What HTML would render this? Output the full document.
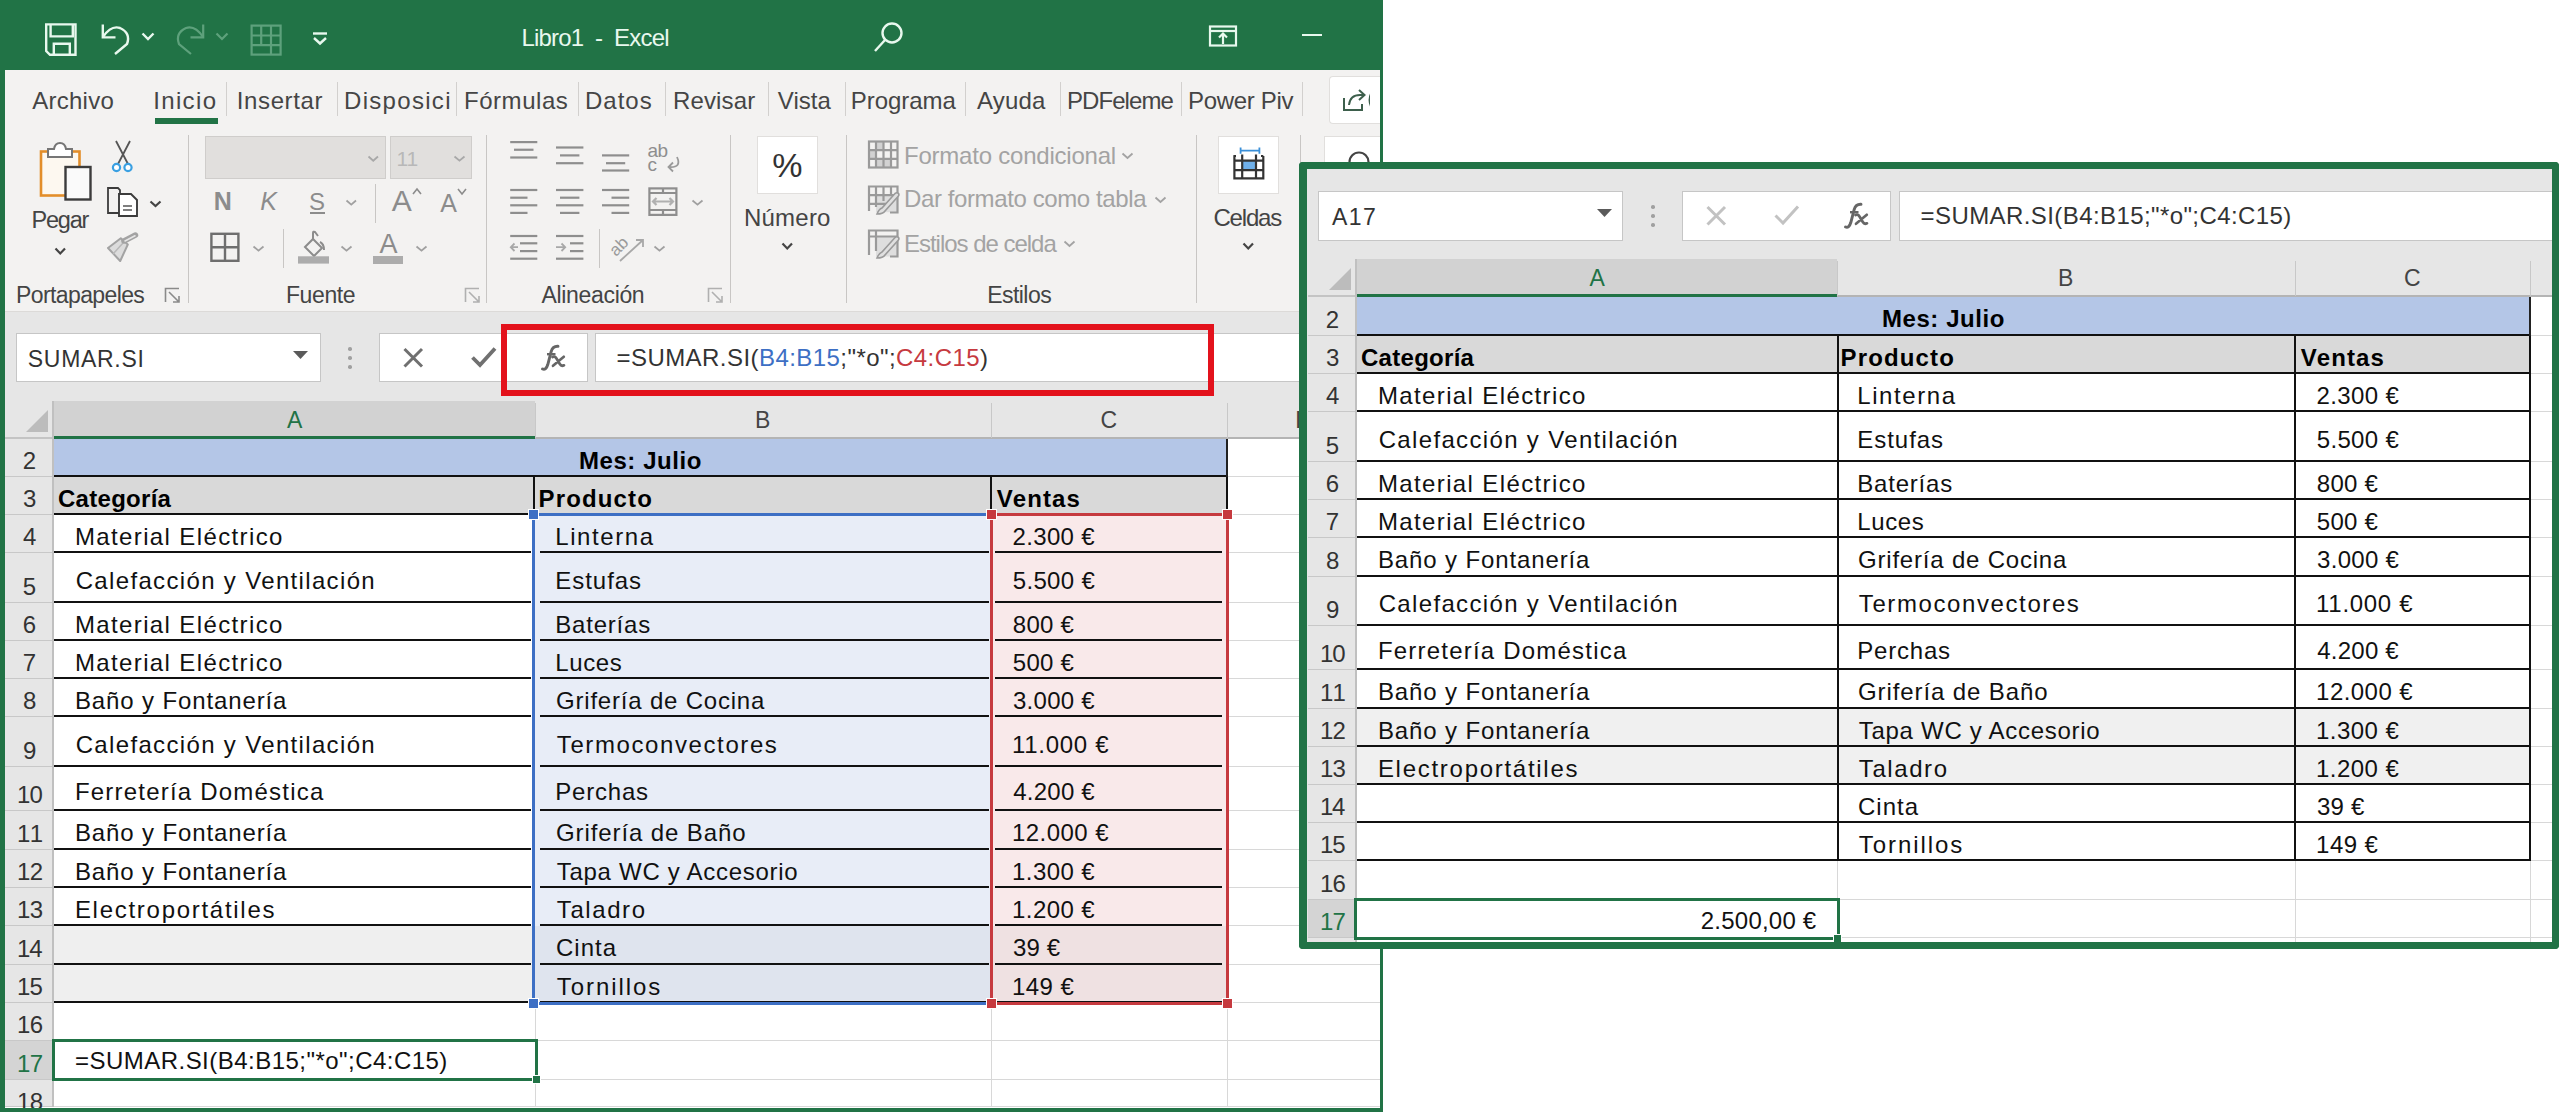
<!DOCTYPE html><html><head><meta charset="utf-8"><style>
html,body{margin:0;padding:0;}
body{width:2560px;height:1112px;overflow:hidden;position:relative;background:#fff;font-family:"Liberation Sans",sans-serif;}
.r{position:absolute;box-sizing:border-box;}
.t{position:absolute;white-space:pre;}
</style></head><body>
<div class="r" style="left:0px;top:0px;width:1383px;height:1112px;background:#ffffff;"></div>
<div class="r" style="left:0px;top:0px;width:1383px;height:70px;background:#217346;"></div>
<div class="r" style="left:5px;top:70px;width:1375px;height:242px;background:#f3f2f1;"></div>
<div class="r" style="left:5px;top:311px;width:1375px;height:1px;background:#dcdad8;"></div>
<div class="r" style="left:5px;top:312px;width:1375px;height:89px;background:#e6e6e6;"></div>
<svg class="r" style="left:40px;top:20px;" width="42" height="40" viewBox="0 0 42 40"><g fill="none" stroke="#e8f8ee" stroke-width="2.4" stroke-linejoin="miter"><path d="M6.2 4.4 H35.5 V34.8 H10 L6.2 31 Z"/><path d="M10.6 4.4 V16.4 H32.8 V4.4"/><path d="M13.8 34.8 V23.8 H29.8 V34.8"/></g></svg>
<svg class="r" style="left:98px;top:20px;" width="40" height="40" viewBox="0 0 40 40"><g fill="none" stroke="#e8f8ee" stroke-width="2.4" stroke-linecap="butt"><path d="M5 17 Q13 5 22 8 Q33 13 29 24 L17 34"/><path d="M4.8 4.4 V17.4 H17.5"/></g></svg>
<svg class="r" style="left:140px;top:30px;" width="16" height="12" viewBox="0 0 16 12"><path d="M2.5 3.5 L8 9 L13.5 3.5" fill="none" stroke="#e8f8ee" stroke-width="2.4"/></svg>
<svg class="r" style="left:172px;top:20px;" width="40" height="40" viewBox="0 0 40 40"><g fill="none" stroke="#5ea17c" stroke-width="2.2"><path d="M31 17 Q23 5 14 8 Q3 13 7 24 L19 34"/><path d="M31.2 4.4 V17.4 H18.5"/></g></svg>
<svg class="r" style="left:214px;top:30px;" width="16" height="12" viewBox="0 0 16 12"><path d="M2.5 3.5 L8 9 L13.5 3.5" fill="none" stroke="#5ea17c" stroke-width="2.2"/></svg>
<svg class="r" style="left:248px;top:22px;" width="36" height="36" viewBox="0 0 36 36"><g fill="none" stroke="#5ea17c" stroke-width="2.2"><rect x="3.6" y="3.6" width="29" height="29"/><path d="M3.6 13.5 H32.6 M3.6 23.2 H32.6 M13.2 3.6 V23.2 M23 3.6 V32.6"/></g></svg>
<svg class="r" style="left:310px;top:28px;" width="20" height="20" viewBox="0 0 20 20"><g fill="none" stroke="#e8f8ee" stroke-width="2.4"><path d="M3 5.5 H17"/><path d="M4 10 L10 15.5 L16 10"/></g></svg>
<span class="t" style="left:521.4px;top:25.6px;font-size:24px;line-height:24px;letter-spacing:-0.79px;color:#e8f8ee;">Libro1  -  Excel</span>
<svg class="r" style="left:870px;top:18px;" width="36" height="38" viewBox="0 0 36 38"><g fill="none" stroke="#e8f8ee" stroke-width="2.4"><circle cx="22" cy="15" r="9.5"/><path d="M15 22 L5 33"/></g></svg>
<svg class="r" style="left:1206px;top:22px;" width="34" height="28" viewBox="0 0 34 28"><g fill="none" stroke="#e8f8ee" stroke-width="2.2"><rect x="4" y="4.5" width="26" height="19"/><path d="M4 9 H30"/><path d="M17 22 V12 M13 15.5 L17 11.5 L21 15.5"/></g></svg>
<div class="r" style="left:1302px;top:34px;width:20px;height:2px;background:#e8f8ee;"></div>
<span class="t" style="left:32.3px;top:89.0px;font-size:24px;line-height:24px;letter-spacing:0.24px;color:#454545;">Archivo</span>
<span class="t" style="left:153.2px;top:89.0px;font-size:24px;line-height:24px;letter-spacing:1.36px;color:#454545;">Inicio</span>
<span class="t" style="left:236.8px;top:89.0px;font-size:24px;line-height:24px;letter-spacing:0.61px;color:#454545;">Insertar</span>
<span class="t" style="left:344.0px;top:89.0px;font-size:24px;line-height:24px;letter-spacing:1.31px;color:#454545;">Disposici</span>
<span class="t" style="left:464.0px;top:89.0px;font-size:24px;line-height:24px;letter-spacing:0.54px;color:#454545;">Fórmulas</span>
<span class="t" style="left:585.0px;top:89.0px;font-size:24px;line-height:24px;letter-spacing:1.00px;color:#454545;">Datos</span>
<span class="t" style="left:673.0px;top:89.0px;font-size:24px;line-height:24px;letter-spacing:0.13px;color:#454545;">Revisar</span>
<span class="t" style="left:777.8px;top:89.0px;font-size:24px;line-height:24px;letter-spacing:0.05px;color:#454545;">Vista</span>
<span class="t" style="left:850.7px;top:89.0px;font-size:24px;line-height:24px;letter-spacing:-0.03px;color:#454545;">Programa</span>
<span class="t" style="left:977.0px;top:89.0px;font-size:24px;line-height:24px;letter-spacing:0.19px;color:#454545;">Ayuda</span>
<span class="t" style="left:1067.0px;top:89.0px;font-size:24px;line-height:24px;letter-spacing:-0.94px;color:#454545;">PDFeleme</span>
<span class="t" style="left:1188.0px;top:89.0px;font-size:24px;line-height:24px;letter-spacing:-0.31px;color:#454545;">Power Piv</span>
<div class="r" style="left:155px;top:118px;width:63px;height:6px;background:#217346;"></div>
<div class="r" style="left:226px;top:82px;width:1px;height:34px;background:#d2d0ce;"></div>
<div class="r" style="left:337px;top:82px;width:1px;height:34px;background:#d2d0ce;"></div>
<div class="r" style="left:456px;top:82px;width:1px;height:34px;background:#d2d0ce;"></div>
<div class="r" style="left:578px;top:82px;width:1px;height:34px;background:#d2d0ce;"></div>
<div class="r" style="left:665px;top:82px;width:1px;height:34px;background:#d2d0ce;"></div>
<div class="r" style="left:768px;top:82px;width:1px;height:34px;background:#d2d0ce;"></div>
<div class="r" style="left:845px;top:82px;width:1px;height:34px;background:#d2d0ce;"></div>
<div class="r" style="left:965px;top:82px;width:1px;height:34px;background:#d2d0ce;"></div>
<div class="r" style="left:1060px;top:82px;width:1px;height:34px;background:#d2d0ce;"></div>
<div class="r" style="left:1181px;top:82px;width:1px;height:34px;background:#d2d0ce;"></div>
<div class="r" style="left:1302px;top:82px;width:1px;height:34px;background:#d2d0ce;"></div>
<div class="r" style="left:1329px;top:76px;width:51px;height:48px;background:#ffffff;border:1px solid #e1dfdd;border-right:none;border-radius:4px 0 0 4px;"></div>
<svg class="r" style="left:1340px;top:86px;" width="30" height="28" viewBox="0 0 30 28"><g fill="none" stroke="#3d5f4c" stroke-width="2"><path d="M4 12 V24 H22 V18"/><path d="M9 19 Q10 9 20 9 H24"/><path d="M19 4 L24.5 9 L19 14"/></g><path d="M37 3 A12 12 0 0 0 37 25" fill="none" stroke="#3d5f4c" stroke-width="2.5"/></svg>
<div class="r" style="left:188px;top:135px;width:1px;height:168px;background:#c8c6c4;"></div>
<div class="r" style="left:486px;top:135px;width:1px;height:168px;background:#c8c6c4;"></div>
<div class="r" style="left:730px;top:135px;width:1px;height:168px;background:#c8c6c4;"></div>
<div class="r" style="left:846px;top:135px;width:1px;height:168px;background:#c8c6c4;"></div>
<div class="r" style="left:1196px;top:135px;width:1px;height:168px;background:#c8c6c4;"></div>
<div class="r" style="left:1300px;top:135px;width:1px;height:168px;background:#c8c6c4;"></div>
<span class="t" style="left:16.1px;top:284.0px;font-size:23px;line-height:23px;letter-spacing:-0.62px;color:#444;">Portapapeles</span>
<span class="t" style="left:285.9px;top:283.8px;font-size:23px;line-height:23px;letter-spacing:-0.37px;color:#444;">Fuente</span>
<span class="t" style="left:541.5px;top:283.8px;font-size:23px;line-height:23px;letter-spacing:-0.33px;color:#444;">Alineación</span>
<span class="t" style="left:987.2px;top:284.1px;font-size:23px;line-height:23px;letter-spacing:-0.54px;color:#444;">Estilos</span>
<svg class="r" style="left:164px;top:287px;" width="18" height="17" viewBox="0 0 18 17"><g fill="none" stroke="#8a8a8a" stroke-width="1.6"><path d="M1.5 15 V1.5 H15"/><path d="M5 5 L15 15 M9 15 H15 V9"/></g></svg>
<svg class="r" style="left:464px;top:287px;" width="18" height="17" viewBox="0 0 18 17"><g fill="none" stroke="#b0b0b0" stroke-width="1.6"><path d="M1.5 15 V1.5 H15"/><path d="M5 5 L15 15 M9 15 H15 V9"/></g></svg>
<svg class="r" style="left:707px;top:287px;" width="18" height="17" viewBox="0 0 18 17"><g fill="none" stroke="#b0b0b0" stroke-width="1.6"><path d="M1.5 15 V1.5 H15"/><path d="M5 5 L15 15 M9 15 H15 V9"/></g></svg>
<svg class="r" style="left:36px;top:138px;" width="60" height="66" viewBox="0 0 60 66"><rect x="5" y="13.5" width="38.5" height="44" fill="#fdf8f0" stroke="#e38e2a" stroke-width="2.6"/><path d="M12 19 V11 H18 Q19 5 24 5 Q29 5 30 11 H36 V19 Z" fill="#fff" stroke="#767676" stroke-width="2"/><rect x="29.5" y="29" width="25" height="32.5" fill="#fafafa" stroke="#3c3c3c" stroke-width="2.4"/></svg>
<span class="t" style="left:31.5px;top:209.0px;font-size:23.5px;line-height:23.5px;letter-spacing:-1.19px;color:#444;">Pegar</span>
<svg class="r" style="left:53.7px;top:247.4px;" width="12.5" height="8.5" viewBox="0 0 12.5 8.5"><path d="M1.5 1.5 L6.25 6.5 L11.0 1.5" fill="none" stroke="#444" stroke-width="2.2"/></svg>
<svg class="r" style="left:108px;top:138px;" width="30" height="38" viewBox="0 0 30 38"><path d="M8 3 L20 26 M22 3 L10 26" fill="none" stroke="#555" stroke-width="1.8"/><circle cx="8.5" cy="29.5" r="3.6" fill="#fff" stroke="#3aa0e2" stroke-width="2.2"/><circle cx="20" cy="29.5" r="3.6" fill="#fff" stroke="#3aa0e2" stroke-width="2.2"/></svg>
<svg class="r" style="left:104px;top:184px;" width="38" height="38" viewBox="0 0 38 38"><path d="M4 4 H14 L16 6 V29 H4 Z" fill="none" stroke="#3c3c3c" stroke-width="1.8"/><path d="M15 10 H27 L33 16 V32 H15 Z" fill="#fff" stroke="#3c3c3c" stroke-width="1.9"/><path d="M19 22 H28 M19 26 H28" stroke="#555" stroke-width="1.6"/></svg>
<svg class="r" style="left:148.8px;top:199.5px;" width="13" height="8" viewBox="0 0 13 8"><path d="M1.5 1.5 L6.5 6 L11.5 1.5" fill="none" stroke="#444" stroke-width="2.2"/></svg>
<svg class="r" style="left:104px;top:230px;" width="38" height="36" viewBox="0 0 38 36"><path d="M4 18 L16.8 8.2 L23.8 14.5 L16.2 31 Z" fill="#dcdcdc" stroke="#a3a3a3" stroke-width="2" stroke-linejoin="round"/><path d="M9 24 L19 13" stroke="#b8b8b8" stroke-width="1.5"/><path d="M20 11 L31.5 5" stroke="#a3a3a3" stroke-width="5.5" stroke-linecap="round"/><path d="M21 11 L31 5.8" stroke="#e6e6e6" stroke-width="1.6" stroke-linecap="round"/></svg>
<div class="r" style="left:205px;top:136px;width:181px;height:43px;background:#e1dfdd;border:1px solid #cfcdcb;"></div>
<svg class="r" style="left:367.2px;top:154.9px;" width="12.5" height="7.7" viewBox="0 0 12.5 7.7"><path d="M1.5 1.5 L6.25 5.7 L11.0 1.5" fill="none" stroke="#a8a8a8" stroke-width="1.8"/></svg>
<div class="r" style="left:390px;top:136px;width:82px;height:43px;background:#e1dfdd;border:1px solid #cfcdcb;"></div>
<span class="t" style="left:396.5px;top:147.8px;font-size:21px;line-height:21px;letter-spacing:0.00px;color:#b8b8b8;">11</span>
<svg class="r" style="left:453px;top:154.9px;" width="13" height="7.7" viewBox="0 0 13 7.7"><path d="M1.5 1.5 L6.5 5.7 L11.5 1.5" fill="none" stroke="#a8a8a8" stroke-width="1.8"/></svg>
<span class="t" style="left:213.7px;top:188.8px;font-size:25px;line-height:25px;letter-spacing:0.00px;color:#8c8c8c;font-weight:700;">N</span>
<span class="t" style="left:260.2px;top:188.8px;font-size:25px;line-height:25px;letter-spacing:0.00px;color:#8c8c8c;font-style:italic;">K</span>
<span class="t" style="left:309.0px;top:189.7px;font-size:24px;line-height:24px;letter-spacing:0.00px;color:#8c8c8c;">S</span>
<div class="r" style="left:310px;top:212px;width:15px;height:2px;background:#8c8c8c;"></div>
<svg class="r" style="left:344.6px;top:199.4px;" width="12.5" height="7.6" viewBox="0 0 12.5 7.6"><path d="M1.5 1.5 L6.25 5.6 L11.0 1.5" fill="none" stroke="#a0a0a0" stroke-width="1.8"/></svg>
<div class="r" style="left:375px;top:184px;width:1px;height:39px;background:#c8c6c4;"></div>
<span class="t" style="left:391.7px;top:186.4px;font-size:30px;line-height:30px;letter-spacing:0.00px;color:#8c8c8c;">A</span>
<svg class="r" style="left:412px;top:187px;" width="10" height="9" viewBox="0 0 10 9"><path d="M1 7 L5 2 L9 7" fill="none" stroke="#8c8c8c" stroke-width="1.6"/></svg>
<span class="t" style="left:440.3px;top:190.6px;font-size:25px;line-height:25px;letter-spacing:0.00px;color:#8c8c8c;">A</span>
<svg class="r" style="left:457px;top:187px;" width="10" height="9" viewBox="0 0 10 9"><path d="M1 2 L5 7 L9 2" fill="none" stroke="#8c8c8c" stroke-width="1.6"/></svg>
<svg class="r" style="left:208px;top:230px;" width="34" height="34" viewBox="0 0 34 34"><g fill="none" stroke="#6e6e6e" stroke-width="2.4"><rect x="3.4" y="3.8" width="27" height="27"/><path d="M17 3.8 V30.8 M3.4 17.2 H30.4"/></g></svg>
<svg class="r" style="left:252.3px;top:244.8px;" width="13" height="7.6" viewBox="0 0 13 7.6"><path d="M1.5 1.5 L6.5 5.6 L11.5 1.5" fill="none" stroke="#a0a0a0" stroke-width="1.8"/></svg>
<div class="r" style="left:283px;top:229px;width:1px;height:39px;background:#c8c6c4;"></div>
<svg class="r" style="left:296px;top:230px;" width="36" height="36" viewBox="0 0 36 36"><g fill="none" stroke="#8c8c8c" stroke-width="2"><path d="M9 17 L17 9 L26 18 L18 26 Z"/><path d="M17 9 V3 Q17 1 19 2 L22 6"/><path d="M24 12 Q28 14 28 20"/></g><rect x="2" y="26.3" width="31" height="7.3" fill="#acacac"/></svg>
<svg class="r" style="left:339.7px;top:244.8px;" width="13" height="7.6" viewBox="0 0 13 7.6"><path d="M1.5 1.5 L6.5 5.6 L11.5 1.5" fill="none" stroke="#a0a0a0" stroke-width="1.8"/></svg>
<span class="t" style="left:379.6px;top:230.9px;font-size:27px;line-height:27px;letter-spacing:0.00px;color:#8c8c8c;">A</span>
<div class="r" style="left:373px;top:256px;width:30px;height:8px;background:#acacac;"></div>
<svg class="r" style="left:415px;top:244.8px;" width="13" height="7.6" viewBox="0 0 13 7.6"><path d="M1.5 1.5 L6.5 5.6 L11.5 1.5" fill="none" stroke="#a0a0a0" stroke-width="1.8"/></svg>
<svg class="r" style="left:508px;top:138px;" width="32" height="32" viewBox="0 0 32 32"><path d="M2.2 4.1 H29.3" stroke="#8e8e8e" stroke-width="2.2"/><path d="M6 11.75 H25.5" stroke="#8e8e8e" stroke-width="2.2"/><path d="M2.2 19.5 H29.3" stroke="#8e8e8e" stroke-width="2.2"/></svg>
<svg class="r" style="left:554px;top:138px;" width="32" height="32" viewBox="0 0 32 32"><path d="M2 9.5 H29.4" stroke="#8e8e8e" stroke-width="2.2"/><path d="M6 17.4 H25.4" stroke="#8e8e8e" stroke-width="2.2"/><path d="M2 25.2 H29.4" stroke="#8e8e8e" stroke-width="2.2"/></svg>
<svg class="r" style="left:600px;top:140px;" width="32" height="32" viewBox="0 0 32 32"><path d="M2 15.4 H29.2" stroke="#8e8e8e" stroke-width="2.2"/><path d="M6 23.2 H25.2" stroke="#8e8e8e" stroke-width="2.2"/><path d="M2 30.5 H29.2" stroke="#8e8e8e" stroke-width="2.2"/></svg>
<svg class="r" style="left:646px;top:138px;" width="40" height="38" viewBox="0 0 40 38"><text x="1.5" y="19" font-family="Liberation Sans" font-size="19" fill="#8e8e8e" letter-spacing="-0.5">ab</text><text x="1.5" y="33" font-family="Liberation Sans" font-size="19" fill="#8e8e8e">c</text><path d="M31 19 Q36 30 23 29 M27 24.5 L22.5 29 L27 33.5" fill="none" stroke="#9a9a9a" stroke-width="1.8"/></svg>
<svg class="r" style="left:508px;top:184px;" width="32" height="32" viewBox="0 0 32 32"><path d="M2.2 6 H29.3" stroke="#8e8e8e" stroke-width="2.2"/><path d="M2.2 13.7 H19.5" stroke="#8e8e8e" stroke-width="2.2"/><path d="M2.2 21.3 H29.3" stroke="#8e8e8e" stroke-width="2.2"/><path d="M2.2 28.9 H19.5" stroke="#8e8e8e" stroke-width="2.2"/></svg>
<svg class="r" style="left:554px;top:184px;" width="32" height="32" viewBox="0 0 32 32"><path d="M2 6 H29.4" stroke="#8e8e8e" stroke-width="2.2"/><path d="M6 13.7 H25.4" stroke="#8e8e8e" stroke-width="2.2"/><path d="M2 21.3 H29.4" stroke="#8e8e8e" stroke-width="2.2"/><path d="M6 28.9 H25.4" stroke="#8e8e8e" stroke-width="2.2"/></svg>
<svg class="r" style="left:600px;top:184px;" width="32" height="32" viewBox="0 0 32 32"><path d="M2 6 H29.2" stroke="#8e8e8e" stroke-width="2.2"/><path d="M11.5 13.7 H29.2" stroke="#8e8e8e" stroke-width="2.2"/><path d="M2 21.3 H29.2" stroke="#8e8e8e" stroke-width="2.2"/><path d="M11.5 28.9 H29.2" stroke="#8e8e8e" stroke-width="2.2"/></svg>
<svg class="r" style="left:646px;top:185px;" width="34" height="34" viewBox="0 0 34 34"><g fill="none" stroke="#8e8e8e" stroke-width="2.2"><rect x="3.4" y="3.4" width="27" height="26.5"/><path d="M3.4 8 H30.4 M3.4 25 H30.4 M17 3.4 V8 M17 25 V30"/><path d="M7 16.5 H27 M10.5 13 L7 16.5 L10.5 20 M23.5 13 L27 16.5 L23.5 20" stroke="#b0b0b0"/></g></svg>
<svg class="r" style="left:690.6px;top:199.4px;" width="13" height="7.6" viewBox="0 0 13 7.6"><path d="M1.5 1.5 L6.5 5.6 L11.5 1.5" fill="none" stroke="#a0a0a0" stroke-width="1.8"/></svg>
<svg class="r" style="left:508px;top:232px;" width="32" height="32" viewBox="0 0 32 32"><path d="M2.2 4 H29.3" stroke="#8e8e8e" stroke-width="2.2"/><path d="M12 11.3 H29.3" stroke="#8e8e8e" stroke-width="2.2"/><path d="M12 19.1 H29.3" stroke="#8e8e8e" stroke-width="2.2"/><path d="M2.2 26.7 H29.3" stroke="#8e8e8e" stroke-width="2.2"/></svg>
<svg class="r" style="left:508px;top:232px;" width="14" height="20" viewBox="0 0 14 20"><path d="M10 15.2 H3 M6.5 11.5 L2.8 15.2 L6.5 19" fill="none" stroke="#a8a8a8" stroke-width="1.8"/></svg>
<svg class="r" style="left:554px;top:232px;" width="32" height="32" viewBox="0 0 32 32"><path d="M2 4 H29.4" stroke="#8e8e8e" stroke-width="2.2"/><path d="M16 11.3 H29.4" stroke="#8e8e8e" stroke-width="2.2"/><path d="M16 19.1 H29.4" stroke="#8e8e8e" stroke-width="2.2"/><path d="M2 26.7 H29.4" stroke="#8e8e8e" stroke-width="2.2"/></svg>
<svg class="r" style="left:554px;top:232px;" width="16" height="20" viewBox="0 0 16 20"><path d="M2 15.2 H11 M7.5 11.5 L11.2 15.2 L7.5 19" fill="none" stroke="#a8a8a8" stroke-width="1.8"/></svg>
<div class="r" style="left:599px;top:229px;width:1px;height:39px;background:#c8c6c4;"></div>
<svg class="r" style="left:610px;top:230px;" width="38" height="36" viewBox="0 0 38 36"><text x="0" y="0" font-family="Liberation Sans" font-size="17" fill="#9a9a9a" transform="translate(6 27) rotate(-45)">ab</text><path d="M10 31 L33 10 M26 10 H33 V17" fill="none" stroke="#a8a8a8" stroke-width="1.8"/></svg>
<svg class="r" style="left:652.5px;top:244.8px;" width="13" height="7.6" viewBox="0 0 13 7.6"><path d="M1.5 1.5 L6.5 5.6 L11.5 1.5" fill="none" stroke="#a0a0a0" stroke-width="1.8"/></svg>
<div class="r" style="left:757px;top:136px;width:61px;height:58px;background:#ffffff;border:1px solid #e1dfdd;"></div>
<span class="t" style="left:772.2px;top:148.2px;font-size:34px;line-height:34px;letter-spacing:0.00px;color:#333;">%</span>
<span class="t" style="left:744.0px;top:205.7px;font-size:24px;line-height:24px;letter-spacing:0.22px;color:#444;">Número</span>
<svg class="r" style="left:781px;top:242px;" width="12.5" height="8.5" viewBox="0 0 12.5 8.5"><path d="M1.5 1.5 L6.25 6.5 L11.0 1.5" fill="none" stroke="#444" stroke-width="2.2"/></svg>
<span class="t" style="left:904.0px;top:143.7px;font-size:24px;line-height:24px;letter-spacing:-0.22px;color:#a3a3a3;">Formato condicional</span>
<svg class="r" style="left:1120.7px;top:152px;" width="13" height="8" viewBox="0 0 13 8"><path d="M1.5 1.5 L6.5 6 L11.5 1.5" fill="none" stroke="#a3a3a3" stroke-width="1.8"/></svg>
<span class="t" style="left:904.0px;top:187.4px;font-size:24px;line-height:24px;letter-spacing:-0.39px;color:#a3a3a3;">Dar formato como tabla</span>
<svg class="r" style="left:1153.8px;top:195.5px;" width="13" height="8" viewBox="0 0 13 8"><path d="M1.5 1.5 L6.5 6 L11.5 1.5" fill="none" stroke="#a3a3a3" stroke-width="1.8"/></svg>
<span class="t" style="left:904.0px;top:232.0px;font-size:24px;line-height:24px;letter-spacing:-1.02px;color:#a3a3a3;">Estilos de celda</span>
<svg class="r" style="left:1063px;top:240px;" width="13" height="8" viewBox="0 0 13 8"><path d="M1.5 1.5 L6.5 6 L11.5 1.5" fill="none" stroke="#a3a3a3" stroke-width="1.8"/></svg>
<svg class="r" style="left:866px;top:138px;" width="34" height="32" viewBox="0 0 34 32"><rect x="10" y="3.5" width="7.5" height="8.7" fill="#d2d2d2"/><rect x="3" y="12.2" width="7" height="8.7" fill="#d2d2d2"/><rect x="10" y="20.9" width="15" height="8.6" fill="#d2d2d2"/><g fill="none" stroke="#9a9a9a" stroke-width="2.2"><rect x="3" y="3.5" width="28.5" height="26"/><path d="M3 12.2 H31.5 M3 20.9 H31.5 M10 3.5 V29.5 M17.5 3.5 V29.5 M25 3.5 V29.5"/></g></svg>
<svg class="r" style="left:866px;top:183px;" width="34" height="34" viewBox="0 0 34 34"><rect x="10" y="12.2" width="21" height="17" fill="#dedede"/><g fill="none" stroke="#9a9a9a" stroke-width="2.2"><path d="M3 28 V3.5 H31.5 V29.5 H24 M3 12.2 H31.5 M3 20.9 H20 M10 3.5 V24 M17.5 3.5 V18 M25 3.5 V12"/></g><path d="M11 31 Q13 26 16 25 L29 10.5 Q31 9 32.5 10.5 Q33.5 12 32 13.5 L19 28 Q17 31 11 31 Z" fill="#e0e0e0" stroke="#9a9a9a" stroke-width="1.6"/></svg>
<svg class="r" style="left:866px;top:227px;" width="34" height="34" viewBox="0 0 34 34"><rect x="10" y="9.5" width="21" height="20" fill="#dedede"/><g fill="none" stroke="#9a9a9a" stroke-width="2.2"><path d="M3 28 V3.5 H31.5 V29.5 H24 M3 9.5 H31.5 M10 3.5 V24"/></g><path d="M11 31 Q13 26 16 25 L29 10.5 Q31 9 32.5 10.5 Q33.5 12 32 13.5 L19 28 Q17 31 11 31 Z" fill="#e0e0e0" stroke="#9a9a9a" stroke-width="1.6"/></svg>
<div class="r" style="left:1218px;top:136px;width:61px;height:58px;background:#ffffff;border:1px solid #e1dfdd;"></div>
<svg class="r" style="left:1228px;top:146px;" width="40" height="38" viewBox="0 0 40 38"><path d="M13 4.6 H31 M12.6 1.5 V7.7 M31.4 1.5 V7.7" stroke="#3a8fd8" stroke-width="1.8" fill="none"/><rect x="14.2" y="14.7" width="13.8" height="9.4" fill="#6fb0ea"/><g fill="none" stroke="#333" stroke-width="2.2"><path d="M6.4 10 V32.3 H35.3 V10 M5.4 10 H8 M33 10 H35.3"/><path d="M6.4 14.7 H35.3 M6.4 24.1 H35.3 M14.2 8.5 V32.3 M28 8.5 V32.3"/></g></svg>
<span class="t" style="left:1213.5px;top:205.7px;font-size:24px;line-height:24px;letter-spacing:-1.21px;color:#444;">Celdas</span>
<svg class="r" style="left:1242px;top:242px;" width="12.5" height="8.5" viewBox="0 0 12.5 8.5"><path d="M1.5 1.5 L6.25 6.5 L11.0 1.5" fill="none" stroke="#444" stroke-width="2.2"/></svg>
<div class="r" style="left:1324px;top:136px;width:56px;height:58px;background:#ffffff;border:1px solid #e1dfdd;border-right:none;"></div>
<svg class="r" style="left:1340px;top:148px;" width="40" height="30" viewBox="0 0 40 30"><circle cx="19" cy="14" r="9.5" fill="none" stroke="#444" stroke-width="2.2"/></svg>
<div class="r" style="left:16px;top:333px;width:305px;height:49px;background:#fff;border:1px solid #c6c6c6;"></div>
<span class="t" style="left:27.8px;top:347.5px;font-size:23px;line-height:23px;letter-spacing:0.69px;color:#333;">SUMAR.SI</span>
<svg class="r" style="left:292px;top:350px;" width="18" height="10" viewBox="0 0 18 10"><path d="M1 1 H16 L8.5 9 Z" fill="#5a5a5a"/></svg>
<div class="r" style="left:348px;top:347px;width:3.5px;height:3.5px;background:#a0a0a0;border-radius:50%;"></div>
<div class="r" style="left:348px;top:356px;width:3.5px;height:3.5px;background:#a0a0a0;border-radius:50%;"></div>
<div class="r" style="left:348px;top:365px;width:3.5px;height:3.5px;background:#a0a0a0;border-radius:50%;"></div>
<div class="r" style="left:379px;top:333px;width:209px;height:49px;background:#fff;border:1px solid #c6c6c6;"></div>
<svg class="r" style="left:402px;top:347px;" width="24" height="22" viewBox="0 0 24 22"><path d="M2.5 2 L20 19.5 M20 2 L2.5 19.5" stroke="#707070" stroke-width="3"/></svg>
<svg class="r" style="left:470px;top:345px;" width="28" height="24" viewBox="0 0 28 24"><path d="M2.5 12.5 L10 20 L25 3.5" fill="none" stroke="#707070" stroke-width="3.8"/></svg>
<svg class="r" style="left:541px;top:343px;" width="28" height="28" viewBox="0 0 28 28"><path d="M1.5 26 Q5 27.5 6.8 21.5 L10.2 8.5 Q11.8 3 17 3.3" fill="none" stroke="#666" stroke-width="2.9" stroke-linecap="round"/><path d="M6 11.2 H14.5" stroke="#666" stroke-width="2.4"/><path d="M11.5 14 Q13.8 12.6 15.5 15.5 L18.8 21 Q20.3 23.6 23 22.3 M22.8 13.8 L12 22.8" fill="none" stroke="#666" stroke-width="2.7" stroke-linecap="round"/></svg>
<div class="r" style="left:595px;top:333px;width:785px;height:49px;background:#fff;border:1px solid #c6c6c6;border-right:none;"></div>
<span class="t" style="left:616.5px;top:346.2px;font-size:24px;line-height:24px;letter-spacing:0.44px;"><span style="color:#333">=SUMAR.SI(</span><span style="color:#3d6fc4">B4:B15</span><span style="color:#333">;"*o";</span><span style="color:#c63a3f">C4:C15</span><span style="color:#333">)</span></span>
<div class="r" style="left:501px;top:324px;width:713px;height:72px;border:6px solid #e3121c;"></div>
<div class="r" style="left:5px;top:401px;width:1375px;height:38px;background:#e6e6e6;"></div>
<div class="r" style="left:54px;top:401px;width:481px;height:38px;background:#d2d2d2;"></div>
<div class="r" style="left:54px;top:436px;width:481px;height:3px;background:#217346;"></div>
<div class="r" style="left:535px;top:437px;width:845px;height:2px;background:#b4b4b4;"></div>
<div class="r" style="left:5px;top:437px;width:49px;height:2px;background:#c4c4c4;"></div>
<div class="r" style="left:535px;top:403px;width:1px;height:35px;background:#c8c8c8;"></div>
<div class="r" style="left:991px;top:403px;width:1px;height:35px;background:#c8c8c8;"></div>
<div class="r" style="left:1227px;top:403px;width:1px;height:35px;background:#c8c8c8;"></div>
<svg class="r" style="left:25px;top:409px;" width="24" height="24" viewBox="0 0 24 24"><path d="M23 1 V23 H1 Z" fill="#bcbcbc"/></svg>
<span class="t" style="left:286.9px;top:408.5px;font-size:23px;line-height:23px;letter-spacing:0.00px;color:#217346;">A</span>
<span class="t" style="left:755.0px;top:408.5px;font-size:23px;line-height:23px;letter-spacing:0.00px;color:#444;">B</span>
<span class="t" style="left:1100.6px;top:408.5px;font-size:23px;line-height:23px;letter-spacing:0.00px;color:#444;">C</span>
<span class="t" style="left:1295.2px;top:408.5px;font-size:23px;line-height:23px;letter-spacing:0.00px;color:#444;">D</span>
<div class="r" style="left:5px;top:439px;width:49px;height:668px;background:#e6e6e6;"></div>
<div class="r" style="left:52px;top:401px;width:2px;height:706px;background:#c0c0c0;"></div>
<div class="r" style="left:54px;top:439px;width:1326px;height:668px;background:#ffffff;"></div>
<div class="r" style="left:5px;top:476px;width:47px;height:1px;background:#c8c8c8;"></div>
<div class="r" style="left:5px;top:514px;width:47px;height:1px;background:#c8c8c8;"></div>
<div class="r" style="left:5px;top:552px;width:47px;height:1px;background:#c8c8c8;"></div>
<div class="r" style="left:5px;top:602px;width:47px;height:1px;background:#c8c8c8;"></div>
<div class="r" style="left:5px;top:640px;width:47px;height:1px;background:#c8c8c8;"></div>
<div class="r" style="left:5px;top:678px;width:47px;height:1px;background:#c8c8c8;"></div>
<div class="r" style="left:5px;top:716px;width:47px;height:1px;background:#c8c8c8;"></div>
<div class="r" style="left:5px;top:766px;width:47px;height:1px;background:#c8c8c8;"></div>
<div class="r" style="left:5px;top:810px;width:47px;height:1px;background:#c8c8c8;"></div>
<div class="r" style="left:5px;top:849px;width:47px;height:1px;background:#c8c8c8;"></div>
<div class="r" style="left:5px;top:887px;width:47px;height:1px;background:#c8c8c8;"></div>
<div class="r" style="left:5px;top:925px;width:47px;height:1px;background:#c8c8c8;"></div>
<div class="r" style="left:5px;top:964px;width:47px;height:1px;background:#c8c8c8;"></div>
<div class="r" style="left:5px;top:1002px;width:47px;height:1px;background:#c8c8c8;"></div>
<div class="r" style="left:5px;top:1040px;width:47px;height:1px;background:#c8c8c8;"></div>
<div class="r" style="left:5px;top:1079px;width:47px;height:1px;background:#c8c8c8;"></div>
<div class="r" style="left:5px;top:1106px;width:47px;height:1px;background:#c8c8c8;"></div>
<div class="r" style="left:5px;top:1041px;width:47px;height:38px;background:#d4d4d4;"></div>
<div class="r" style="left:54px;top:439px;width:1173px;height:38px;background:#b4c6e7;"></div>
<div class="r" style="left:54px;top:477px;width:1173px;height:38px;background:#d9d9d9;"></div>
<div class="r" style="left:535px;top:515px;width:456px;height:488px;background:#e8edf7;"></div>
<div class="r" style="left:991px;top:515px;width:236px;height:488px;background:#f9e9ea;"></div>
<div class="r" style="left:54px;top:926px;width:481px;height:77px;background:#efefef;"></div>
<div class="r" style="left:535px;top:926px;width:456px;height:77px;background:#dfe4ee;"></div>
<div class="r" style="left:991px;top:926px;width:236px;height:77px;background:#efe1e2;"></div>
<div class="r" style="left:1227px;top:476px;width:153px;height:1px;background:#d8d8d8;"></div>
<div class="r" style="left:1227px;top:514px;width:153px;height:1px;background:#d8d8d8;"></div>
<div class="r" style="left:1227px;top:552px;width:153px;height:1px;background:#d8d8d8;"></div>
<div class="r" style="left:1227px;top:602px;width:153px;height:1px;background:#d8d8d8;"></div>
<div class="r" style="left:1227px;top:640px;width:153px;height:1px;background:#d8d8d8;"></div>
<div class="r" style="left:1227px;top:678px;width:153px;height:1px;background:#d8d8d8;"></div>
<div class="r" style="left:1227px;top:716px;width:153px;height:1px;background:#d8d8d8;"></div>
<div class="r" style="left:1227px;top:766px;width:153px;height:1px;background:#d8d8d8;"></div>
<div class="r" style="left:1227px;top:810px;width:153px;height:1px;background:#d8d8d8;"></div>
<div class="r" style="left:1227px;top:849px;width:153px;height:1px;background:#d8d8d8;"></div>
<div class="r" style="left:1227px;top:887px;width:153px;height:1px;background:#d8d8d8;"></div>
<div class="r" style="left:1227px;top:925px;width:153px;height:1px;background:#d8d8d8;"></div>
<div class="r" style="left:1227px;top:964px;width:153px;height:1px;background:#d8d8d8;"></div>
<div class="r" style="left:54px;top:1002px;width:1326px;height:1px;background:#d8d8d8;"></div>
<div class="r" style="left:54px;top:1040px;width:1326px;height:1px;background:#d8d8d8;"></div>
<div class="r" style="left:54px;top:1079px;width:1326px;height:1px;background:#d8d8d8;"></div>
<div class="r" style="left:54px;top:1106px;width:1326px;height:1px;background:#d8d8d8;"></div>
<div class="r" style="left:535px;top:1003px;width:1px;height:104px;background:#d8d8d8;"></div>
<div class="r" style="left:991px;top:1003px;width:1px;height:104px;background:#d8d8d8;"></div>
<div class="r" style="left:1227px;top:439px;width:1px;height:668px;background:#d8d8d8;"></div>
<div class="r" style="left:54px;top:475px;width:1173px;height:2px;background:#111;"></div>
<div class="r" style="left:54px;top:513px;width:1173px;height:2px;background:#111;"></div>
<div class="r" style="left:54px;top:551px;width:477px;height:2px;background:#111;"></div>
<div class="r" style="left:540px;top:551px;width:449px;height:2px;background:#111;"></div>
<div class="r" style="left:995px;top:551px;width:227px;height:2px;background:#111;"></div>
<div class="r" style="left:54px;top:601px;width:477px;height:2px;background:#111;"></div>
<div class="r" style="left:540px;top:601px;width:449px;height:2px;background:#111;"></div>
<div class="r" style="left:995px;top:601px;width:227px;height:2px;background:#111;"></div>
<div class="r" style="left:54px;top:639px;width:477px;height:2px;background:#111;"></div>
<div class="r" style="left:540px;top:639px;width:449px;height:2px;background:#111;"></div>
<div class="r" style="left:995px;top:639px;width:227px;height:2px;background:#111;"></div>
<div class="r" style="left:54px;top:677px;width:477px;height:2px;background:#111;"></div>
<div class="r" style="left:540px;top:677px;width:449px;height:2px;background:#111;"></div>
<div class="r" style="left:995px;top:677px;width:227px;height:2px;background:#111;"></div>
<div class="r" style="left:54px;top:715px;width:477px;height:2px;background:#111;"></div>
<div class="r" style="left:540px;top:715px;width:449px;height:2px;background:#111;"></div>
<div class="r" style="left:995px;top:715px;width:227px;height:2px;background:#111;"></div>
<div class="r" style="left:54px;top:765px;width:477px;height:2px;background:#111;"></div>
<div class="r" style="left:540px;top:765px;width:449px;height:2px;background:#111;"></div>
<div class="r" style="left:995px;top:765px;width:227px;height:2px;background:#111;"></div>
<div class="r" style="left:54px;top:809px;width:477px;height:2px;background:#111;"></div>
<div class="r" style="left:540px;top:809px;width:449px;height:2px;background:#111;"></div>
<div class="r" style="left:995px;top:809px;width:227px;height:2px;background:#111;"></div>
<div class="r" style="left:54px;top:848px;width:477px;height:2px;background:#111;"></div>
<div class="r" style="left:540px;top:848px;width:449px;height:2px;background:#111;"></div>
<div class="r" style="left:995px;top:848px;width:227px;height:2px;background:#111;"></div>
<div class="r" style="left:54px;top:886px;width:477px;height:2px;background:#111;"></div>
<div class="r" style="left:540px;top:886px;width:449px;height:2px;background:#111;"></div>
<div class="r" style="left:995px;top:886px;width:227px;height:2px;background:#111;"></div>
<div class="r" style="left:54px;top:924px;width:477px;height:2px;background:#111;"></div>
<div class="r" style="left:540px;top:924px;width:449px;height:2px;background:#111;"></div>
<div class="r" style="left:995px;top:924px;width:227px;height:2px;background:#111;"></div>
<div class="r" style="left:54px;top:963px;width:477px;height:2px;background:#111;"></div>
<div class="r" style="left:540px;top:963px;width:449px;height:2px;background:#111;"></div>
<div class="r" style="left:995px;top:963px;width:227px;height:2px;background:#111;"></div>
<div class="r" style="left:54px;top:1001px;width:477px;height:2px;background:#111;"></div>
<div class="r" style="left:540px;top:1001px;width:449px;height:2px;background:#111;"></div>
<div class="r" style="left:995px;top:1001px;width:227px;height:2px;background:#111;"></div>
<div class="r" style="left:533px;top:477px;width:2px;height:526px;background:#111;"></div>
<div class="r" style="left:990px;top:477px;width:2px;height:526px;background:#111;"></div>
<div class="r" style="left:1226px;top:477px;width:2px;height:526px;background:#111;"></div>
<div class="r" style="left:1226px;top:439px;width:2px;height:38px;background:#222;"></div>
<span class="t" style="left:22.8px;top:448.7px;font-size:24px;line-height:24px;letter-spacing:0.00px;color:#333;">2</span>
<span class="t" style="left:23.0px;top:486.7px;font-size:24px;line-height:24px;letter-spacing:0.00px;color:#333;">3</span>
<span class="t" style="left:22.9px;top:524.7px;font-size:24px;line-height:24px;letter-spacing:0.00px;color:#333;">4</span>
<span class="t" style="left:22.8px;top:574.7px;font-size:24px;line-height:24px;letter-spacing:0.00px;color:#333;">5</span>
<span class="t" style="left:22.8px;top:612.7px;font-size:24px;line-height:24px;letter-spacing:0.00px;color:#333;">6</span>
<span class="t" style="left:22.8px;top:650.7px;font-size:24px;line-height:24px;letter-spacing:0.00px;color:#333;">7</span>
<span class="t" style="left:22.9px;top:688.7px;font-size:24px;line-height:24px;letter-spacing:0.00px;color:#333;">8</span>
<span class="t" style="left:22.9px;top:738.7px;font-size:24px;line-height:24px;letter-spacing:0.00px;color:#333;">9</span>
<span class="t" style="left:17.1px;top:782.7px;font-size:24px;line-height:24px;letter-spacing:-1.00px;color:#333;">10</span>
<span class="t" style="left:17.1px;top:821.7px;font-size:24px;line-height:24px;letter-spacing:1.00px;color:#333;">11</span>
<span class="t" style="left:17.1px;top:859.7px;font-size:24px;line-height:24px;letter-spacing:-0.75px;color:#333;">12</span>
<span class="t" style="left:17.1px;top:897.7px;font-size:24px;line-height:24px;letter-spacing:-0.75px;color:#333;">13</span>
<span class="t" style="left:17.1px;top:936.7px;font-size:24px;line-height:24px;letter-spacing:-1.25px;color:#333;">14</span>
<span class="t" style="left:17.1px;top:974.7px;font-size:24px;line-height:24px;letter-spacing:-1.00px;color:#333;">15</span>
<span class="t" style="left:17.1px;top:1012.7px;font-size:24px;line-height:24px;letter-spacing:-0.75px;color:#333;">16</span>
<span class="t" style="left:17.1px;top:1051.7px;font-size:24px;line-height:24px;letter-spacing:-0.75px;color:#217346;">17</span>
<span class="t" style="left:17.1px;top:1089.7px;font-size:24px;line-height:24px;letter-spacing:-0.75px;color:#333;">18</span>
<span class="t" style="left:579.0px;top:448.9px;font-size:24px;line-height:24px;letter-spacing:0.56px;color:#000;font-weight:700;">Mes: Julio</span>
<span class="t" style="left:58.0px;top:486.9px;font-size:24px;line-height:24px;letter-spacing:0.28px;color:#000;font-weight:700;">Categoría</span>
<span class="t" style="left:538.5px;top:486.9px;font-size:24px;line-height:24px;letter-spacing:1.14px;color:#000;font-weight:700;">Producto</span>
<span class="t" style="left:996.8px;top:486.9px;font-size:24px;line-height:24px;letter-spacing:1.15px;color:#000;font-weight:700;">Ventas</span>
<span class="t" style="left:74.9px;top:524.9px;font-size:24px;line-height:24px;letter-spacing:1.38px;color:#111;">Material Eléctrico</span>
<span class="t" style="left:555.3px;top:524.9px;font-size:24px;line-height:24px;letter-spacing:1.57px;color:#111;">Linterna</span>
<span class="t" style="left:1012.5px;top:524.9px;font-size:24px;line-height:24px;letter-spacing:0.35px;color:#111;">2.300 €</span>
<span class="t" style="left:75.7px;top:568.9px;font-size:24px;line-height:24px;letter-spacing:1.34px;color:#111;">Calefacción y Ventilación</span>
<span class="t" style="left:555.3px;top:568.9px;font-size:24px;line-height:24px;letter-spacing:0.96px;color:#111;">Estufas</span>
<span class="t" style="left:1012.8px;top:568.9px;font-size:24px;line-height:24px;letter-spacing:0.31px;color:#111;">5.500 €</span>
<span class="t" style="left:74.9px;top:612.9px;font-size:24px;line-height:24px;letter-spacing:1.38px;color:#111;">Material Eléctrico</span>
<span class="t" style="left:555.3px;top:612.9px;font-size:24px;line-height:24px;letter-spacing:0.78px;color:#111;">Baterías</span>
<span class="t" style="left:1012.8px;top:612.9px;font-size:24px;line-height:24px;letter-spacing:0.26px;color:#111;">800 €</span>
<span class="t" style="left:74.9px;top:650.9px;font-size:24px;line-height:24px;letter-spacing:1.38px;color:#111;">Material Eléctrico</span>
<span class="t" style="left:555.3px;top:650.9px;font-size:24px;line-height:24px;letter-spacing:0.61px;color:#111;">Luces</span>
<span class="t" style="left:1012.8px;top:650.9px;font-size:24px;line-height:24px;letter-spacing:0.26px;color:#111;">500 €</span>
<span class="t" style="left:74.9px;top:688.9px;font-size:24px;line-height:24px;letter-spacing:0.88px;color:#111;">Baño y Fontanería</span>
<span class="t" style="left:556.0px;top:688.9px;font-size:24px;line-height:24px;letter-spacing:0.80px;color:#111;">Grifería de Cocina</span>
<span class="t" style="left:1013.0px;top:688.9px;font-size:24px;line-height:24px;letter-spacing:0.27px;color:#111;">3.000 €</span>
<span class="t" style="left:75.7px;top:732.9px;font-size:24px;line-height:24px;letter-spacing:1.34px;color:#111;">Calefacción y Ventilación</span>
<span class="t" style="left:556.8px;top:732.9px;font-size:24px;line-height:24px;letter-spacing:1.60px;color:#111;">Termoconvectores</span>
<span class="t" style="left:1012.0px;top:732.9px;font-size:24px;line-height:24px;letter-spacing:0.70px;color:#111;">11.000 €</span>
<span class="t" style="left:74.9px;top:779.9px;font-size:24px;line-height:24px;letter-spacing:1.21px;color:#111;">Ferretería Doméstica</span>
<span class="t" style="left:555.3px;top:779.9px;font-size:24px;line-height:24px;letter-spacing:0.78px;color:#111;">Perchas</span>
<span class="t" style="left:1013.3px;top:779.9px;font-size:24px;line-height:24px;letter-spacing:0.22px;color:#111;">4.200 €</span>
<span class="t" style="left:74.9px;top:821.4px;font-size:24px;line-height:24px;letter-spacing:0.88px;color:#111;">Baño y Fontanería</span>
<span class="t" style="left:556.0px;top:821.4px;font-size:24px;line-height:24px;letter-spacing:0.90px;color:#111;">Grifería de Baño</span>
<span class="t" style="left:1012.0px;top:821.4px;font-size:24px;line-height:24px;letter-spacing:0.45px;color:#111;">12.000 €</span>
<span class="t" style="left:74.9px;top:859.9px;font-size:24px;line-height:24px;letter-spacing:0.88px;color:#111;">Baño y Fontanería</span>
<span class="t" style="left:556.8px;top:859.9px;font-size:24px;line-height:24px;letter-spacing:0.71px;color:#111;">Tapa WC y Accesorio</span>
<span class="t" style="left:1012.0px;top:859.9px;font-size:24px;line-height:24px;letter-spacing:0.43px;color:#111;">1.300 €</span>
<span class="t" style="left:74.9px;top:897.9px;font-size:24px;line-height:24px;letter-spacing:1.72px;color:#111;">Electroportátiles</span>
<span class="t" style="left:556.8px;top:897.9px;font-size:24px;line-height:24px;letter-spacing:1.58px;color:#111;">Taladro</span>
<span class="t" style="left:1012.0px;top:897.9px;font-size:24px;line-height:24px;letter-spacing:0.43px;color:#111;">1.200 €</span>
<span class="t" style="left:556.0px;top:936.4px;font-size:24px;line-height:24px;letter-spacing:1.00px;color:#111;">Cinta</span>
<span class="t" style="left:1013.0px;top:936.4px;font-size:24px;line-height:24px;letter-spacing:0.17px;color:#111;">39 €</span>
<span class="t" style="left:556.8px;top:974.9px;font-size:24px;line-height:24px;letter-spacing:1.94px;color:#111;">Tornillos</span>
<span class="t" style="left:1012.0px;top:974.9px;font-size:24px;line-height:24px;letter-spacing:0.45px;color:#111;">149 €</span>
<div class="r" style="left:532px;top:513px;width:461px;height:3px;background:#3d6fc4;"></div>
<div class="r" style="left:532px;top:1002px;width:461px;height:3px;background:#3d6fc4;"></div>
<div class="r" style="left:532px;top:513px;width:3px;height:492px;background:#3d6fc4;"></div>
<div class="r" style="left:990px;top:513px;width:3px;height:492px;background:#3d6fc4;"></div>
<div class="r" style="left:528.0px;top:509.0px;width:11.0px;height:11.0px;background:#3d6fc4;border:1.2px solid #fff;"></div>
<div class="r" style="left:986.0px;top:509.0px;width:11.0px;height:11.0px;background:#3d6fc4;border:1.2px solid #fff;"></div>
<div class="r" style="left:528.0px;top:998.0px;width:11.0px;height:11.0px;background:#3d6fc4;border:1.2px solid #fff;"></div>
<div class="r" style="left:986.0px;top:998.0px;width:11.0px;height:11.0px;background:#3d6fc4;border:1.2px solid #fff;"></div>
<div class="r" style="left:990px;top:513px;width:239px;height:3px;background:#c63a3f;"></div>
<div class="r" style="left:990px;top:1002px;width:239px;height:3px;background:#c63a3f;"></div>
<div class="r" style="left:990px;top:513px;width:3px;height:492px;background:#c63a3f;"></div>
<div class="r" style="left:1226px;top:513px;width:3px;height:492px;background:#c63a3f;"></div>
<div class="r" style="left:986.0px;top:509.0px;width:11.0px;height:11.0px;background:#c63a3f;border:1.2px solid #fff;"></div>
<div class="r" style="left:1222.0px;top:509.0px;width:11.0px;height:11.0px;background:#c63a3f;border:1.2px solid #fff;"></div>
<div class="r" style="left:986.0px;top:998.0px;width:11.0px;height:11.0px;background:#c63a3f;border:1.2px solid #fff;"></div>
<div class="r" style="left:1222.0px;top:998.0px;width:11.0px;height:11.0px;background:#c63a3f;border:1.2px solid #fff;"></div>
<div class="r" style="left:52px;top:1039px;width:486px;height:42px;border:3px solid #217346;"></div>
<div class="r" style="left:532px;top:1075px;width:9px;height:9px;background:#217346;border:1.5px solid #fff;"></div>
<span class="t" style="left:75.0px;top:1048.7px;font-size:24px;line-height:24px;letter-spacing:0.47px;color:#111;">=SUMAR.SI(B4:B15;"*o";C4:C15)</span>
<div class="r" style="left:0px;top:0px;width:5px;height:1112px;background:#217346;"></div>
<div class="r" style="left:1380px;top:0px;width:3px;height:1112px;background:#217346;"></div>
<div class="r" style="left:0px;top:1108px;width:1383px;height:4px;background:#217346;"></div>
<div class="r" style="left:1299px;top:162px;width:1260px;height:787px;background:#e6e6e6;border:7px solid #217346;border-left-width:8px;border-radius:4px;"></div>
<div class="r" style="left:1318px;top:191px;width:305px;height:50px;background:#fff;border:1px solid #c6c6c6;"></div>
<span class="t" style="left:1331.9px;top:205.5px;font-size:23px;line-height:23px;letter-spacing:1.55px;color:#333;">A17</span>
<svg class="r" style="left:1596px;top:208px;" width="18" height="10" viewBox="0 0 18 10"><path d="M1 1 H16 L8.5 9 Z" fill="#5a5a5a"/></svg>
<div class="r" style="left:1651px;top:205px;width:3.5px;height:3.5px;background:#a0a0a0;border-radius:50%;"></div>
<div class="r" style="left:1651px;top:214px;width:3.5px;height:3.5px;background:#a0a0a0;border-radius:50%;"></div>
<div class="r" style="left:1651px;top:223px;width:3.5px;height:3.5px;background:#a0a0a0;border-radius:50%;"></div>
<div class="r" style="left:1682px;top:191px;width:209px;height:50px;background:#fff;border:1px solid #c6c6c6;"></div>
<svg class="r" style="left:1705px;top:205px;" width="24" height="22" viewBox="0 0 24 22"><path d="M2.5 2 L20 19.5 M20 2 L2.5 19.5" stroke="#c2c2c2" stroke-width="3"/></svg>
<svg class="r" style="left:1773px;top:203px;" width="28" height="24" viewBox="0 0 28 24"><path d="M2.5 12.5 L10 20 L25 3.5" fill="none" stroke="#c2c2c2" stroke-width="3.0"/></svg>
<svg class="r" style="left:1844px;top:201px;" width="28" height="28" viewBox="0 0 28 28"><path d="M1.5 26 Q5 27.5 6.8 21.5 L10.2 8.5 Q11.8 3 17 3.3" fill="none" stroke="#666" stroke-width="2.9" stroke-linecap="round"/><path d="M6 11.2 H14.5" stroke="#666" stroke-width="2.4"/><path d="M11.5 14 Q13.8 12.6 15.5 15.5 L18.8 21 Q20.3 23.6 23 22.3 M22.8 13.8 L12 22.8" fill="none" stroke="#666" stroke-width="2.7" stroke-linecap="round"/></svg>
<div class="r" style="left:1899px;top:191px;width:653px;height:50px;background:#fff;border:1px solid #c6c6c6;border-right:none;"></div>
<span class="t" style="left:1920.6px;top:204.2px;font-size:24px;line-height:24px;letter-spacing:0.41px;"><span style="color:#333">=SUMAR.SI(B4:B15;"*o";C4:C15)</span></span>
<div class="r" style="left:1308px;top:259px;width:1244px;height:38px;background:#e6e6e6;"></div>
<div class="r" style="left:1357px;top:259px;width:480px;height:38px;background:#d2d2d2;"></div>
<div class="r" style="left:1357px;top:294px;width:480px;height:3px;background:#217346;"></div>
<div class="r" style="left:1837px;top:295px;width:715px;height:2px;background:#b4b4b4;"></div>
<div class="r" style="left:1308px;top:295px;width:49px;height:2px;background:#c4c4c4;"></div>
<div class="r" style="left:1837px;top:261px;width:1px;height:35px;background:#c8c8c8;"></div>
<div class="r" style="left:2295px;top:261px;width:1px;height:35px;background:#c8c8c8;"></div>
<div class="r" style="left:2530px;top:261px;width:1px;height:35px;background:#c8c8c8;"></div>
<svg class="r" style="left:1328px;top:267px;" width="24" height="24" viewBox="0 0 24 24"><path d="M23 1 V23 H1 Z" fill="#bcbcbc"/></svg>
<span class="t" style="left:1589.4px;top:266.5px;font-size:23px;line-height:23px;letter-spacing:0.00px;color:#217346;">A</span>
<span class="t" style="left:2058.0px;top:266.5px;font-size:23px;line-height:23px;letter-spacing:0.00px;color:#444;">B</span>
<span class="t" style="left:2404.1px;top:266.5px;font-size:23px;line-height:23px;letter-spacing:0.00px;color:#444;">C</span>
<div class="r" style="left:1308px;top:297px;width:49px;height:646px;background:#e6e6e6;"></div>
<div class="r" style="left:1355px;top:259px;width:2px;height:684px;background:#c0c0c0;"></div>
<div class="r" style="left:1357px;top:297px;width:1195px;height:646px;background:#ffffff;"></div>
<div class="r" style="left:1308px;top:335px;width:47px;height:1px;background:#c8c8c8;"></div>
<div class="r" style="left:1308px;top:373px;width:47px;height:1px;background:#c8c8c8;"></div>
<div class="r" style="left:1308px;top:411px;width:47px;height:1px;background:#c8c8c8;"></div>
<div class="r" style="left:1308px;top:461px;width:47px;height:1px;background:#c8c8c8;"></div>
<div class="r" style="left:1308px;top:499px;width:47px;height:1px;background:#c8c8c8;"></div>
<div class="r" style="left:1308px;top:537px;width:47px;height:1px;background:#c8c8c8;"></div>
<div class="r" style="left:1308px;top:576px;width:47px;height:1px;background:#c8c8c8;"></div>
<div class="r" style="left:1308px;top:625px;width:47px;height:1px;background:#c8c8c8;"></div>
<div class="r" style="left:1308px;top:669px;width:47px;height:1px;background:#c8c8c8;"></div>
<div class="r" style="left:1308px;top:708px;width:47px;height:1px;background:#c8c8c8;"></div>
<div class="r" style="left:1308px;top:746px;width:47px;height:1px;background:#c8c8c8;"></div>
<div class="r" style="left:1308px;top:784px;width:47px;height:1px;background:#c8c8c8;"></div>
<div class="r" style="left:1308px;top:822px;width:47px;height:1px;background:#c8c8c8;"></div>
<div class="r" style="left:1308px;top:860px;width:47px;height:1px;background:#c8c8c8;"></div>
<div class="r" style="left:1308px;top:899px;width:47px;height:1px;background:#c8c8c8;"></div>
<div class="r" style="left:1308px;top:937px;width:47px;height:1px;background:#c8c8c8;"></div>
<div class="r" style="left:1308px;top:942px;width:47px;height:1px;background:#c8c8c8;"></div>
<div class="r" style="left:1308px;top:900px;width:47px;height:37px;background:#d4d4d4;"></div>
<div class="r" style="left:1357px;top:297px;width:1173px;height:39px;background:#b4c6e7;"></div>
<div class="r" style="left:1357px;top:336px;width:1173px;height:38px;background:#d9d9d9;"></div>
<div class="r" style="left:1357px;top:709px;width:1173px;height:76px;background:#f0f0f0;"></div>
<div class="r" style="left:2530px;top:335px;width:22px;height:1px;background:#d8d8d8;"></div>
<div class="r" style="left:2530px;top:373px;width:22px;height:1px;background:#d8d8d8;"></div>
<div class="r" style="left:2530px;top:411px;width:22px;height:1px;background:#d8d8d8;"></div>
<div class="r" style="left:2530px;top:461px;width:22px;height:1px;background:#d8d8d8;"></div>
<div class="r" style="left:2530px;top:499px;width:22px;height:1px;background:#d8d8d8;"></div>
<div class="r" style="left:2530px;top:537px;width:22px;height:1px;background:#d8d8d8;"></div>
<div class="r" style="left:2530px;top:576px;width:22px;height:1px;background:#d8d8d8;"></div>
<div class="r" style="left:2530px;top:625px;width:22px;height:1px;background:#d8d8d8;"></div>
<div class="r" style="left:2530px;top:669px;width:22px;height:1px;background:#d8d8d8;"></div>
<div class="r" style="left:2530px;top:708px;width:22px;height:1px;background:#d8d8d8;"></div>
<div class="r" style="left:2530px;top:746px;width:22px;height:1px;background:#d8d8d8;"></div>
<div class="r" style="left:2530px;top:784px;width:22px;height:1px;background:#d8d8d8;"></div>
<div class="r" style="left:2530px;top:822px;width:22px;height:1px;background:#d8d8d8;"></div>
<div class="r" style="left:1357px;top:860px;width:1195px;height:1px;background:#d8d8d8;"></div>
<div class="r" style="left:1357px;top:899px;width:1195px;height:1px;background:#d8d8d8;"></div>
<div class="r" style="left:1357px;top:937px;width:1195px;height:1px;background:#d8d8d8;"></div>
<div class="r" style="left:1357px;top:942px;width:1195px;height:1px;background:#d8d8d8;"></div>
<div class="r" style="left:1837px;top:861px;width:1px;height:82px;background:#d8d8d8;"></div>
<div class="r" style="left:2295px;top:861px;width:1px;height:82px;background:#d8d8d8;"></div>
<div class="r" style="left:2530px;top:297px;width:1px;height:646px;background:#d8d8d8;"></div>
<div class="r" style="left:1357px;top:334px;width:1173px;height:2px;background:#111;"></div>
<div class="r" style="left:1357px;top:372px;width:1173px;height:2px;background:#111;"></div>
<div class="r" style="left:1357px;top:410px;width:1173px;height:2px;background:#111;"></div>
<div class="r" style="left:1357px;top:460px;width:1173px;height:2px;background:#111;"></div>
<div class="r" style="left:1357px;top:498px;width:1173px;height:2px;background:#111;"></div>
<div class="r" style="left:1357px;top:536px;width:1173px;height:2px;background:#111;"></div>
<div class="r" style="left:1357px;top:575px;width:1173px;height:2px;background:#111;"></div>
<div class="r" style="left:1357px;top:624px;width:1173px;height:2px;background:#111;"></div>
<div class="r" style="left:1357px;top:668px;width:1173px;height:2px;background:#111;"></div>
<div class="r" style="left:1357px;top:707px;width:1173px;height:2px;background:#111;"></div>
<div class="r" style="left:1357px;top:745px;width:1173px;height:2px;background:#111;"></div>
<div class="r" style="left:1357px;top:783px;width:1173px;height:2px;background:#111;"></div>
<div class="r" style="left:1357px;top:821px;width:1173px;height:2px;background:#111;"></div>
<div class="r" style="left:1357px;top:859px;width:1173px;height:2px;background:#111;"></div>
<div class="r" style="left:1837px;top:336px;width:2px;height:525px;background:#111;"></div>
<div class="r" style="left:2294px;top:336px;width:2px;height:525px;background:#111;"></div>
<div class="r" style="left:2529px;top:336px;width:2px;height:525px;background:#111;"></div>
<div class="r" style="left:2529px;top:297px;width:2px;height:39px;background:#222;"></div>
<span class="t" style="left:1325.8px;top:307.7px;font-size:24px;line-height:24px;letter-spacing:0.00px;color:#333;">2</span>
<span class="t" style="left:1326.0px;top:345.7px;font-size:24px;line-height:24px;letter-spacing:0.00px;color:#333;">3</span>
<span class="t" style="left:1325.9px;top:383.7px;font-size:24px;line-height:24px;letter-spacing:0.00px;color:#333;">4</span>
<span class="t" style="left:1325.8px;top:433.7px;font-size:24px;line-height:24px;letter-spacing:0.00px;color:#333;">5</span>
<span class="t" style="left:1325.8px;top:471.7px;font-size:24px;line-height:24px;letter-spacing:0.00px;color:#333;">6</span>
<span class="t" style="left:1325.8px;top:509.7px;font-size:24px;line-height:24px;letter-spacing:0.00px;color:#333;">7</span>
<span class="t" style="left:1325.9px;top:548.7px;font-size:24px;line-height:24px;letter-spacing:0.00px;color:#333;">8</span>
<span class="t" style="left:1325.9px;top:597.7px;font-size:24px;line-height:24px;letter-spacing:0.00px;color:#333;">9</span>
<span class="t" style="left:1320.0px;top:641.7px;font-size:24px;line-height:24px;letter-spacing:-1.00px;color:#333;">10</span>
<span class="t" style="left:1320.0px;top:680.7px;font-size:24px;line-height:24px;letter-spacing:1.00px;color:#333;">11</span>
<span class="t" style="left:1320.0px;top:718.7px;font-size:24px;line-height:24px;letter-spacing:-0.75px;color:#333;">12</span>
<span class="t" style="left:1320.0px;top:756.7px;font-size:24px;line-height:24px;letter-spacing:-0.75px;color:#333;">13</span>
<span class="t" style="left:1320.0px;top:794.7px;font-size:24px;line-height:24px;letter-spacing:-1.25px;color:#333;">14</span>
<span class="t" style="left:1320.0px;top:832.7px;font-size:24px;line-height:24px;letter-spacing:-1.00px;color:#333;">15</span>
<span class="t" style="left:1320.0px;top:871.7px;font-size:24px;line-height:24px;letter-spacing:-0.75px;color:#333;">16</span>
<span class="t" style="left:1320.0px;top:909.7px;font-size:24px;line-height:24px;letter-spacing:-0.75px;color:#217346;">17</span>
<span class="t" style="left:1882.0px;top:307.4px;font-size:24px;line-height:24px;letter-spacing:0.56px;color:#000;font-weight:700;">Mes: Julio</span>
<span class="t" style="left:1361.0px;top:345.9px;font-size:24px;line-height:24px;letter-spacing:0.28px;color:#000;font-weight:700;">Categoría</span>
<span class="t" style="left:1840.5px;top:345.9px;font-size:24px;line-height:24px;letter-spacing:1.14px;color:#000;font-weight:700;">Producto</span>
<span class="t" style="left:2300.8px;top:345.9px;font-size:24px;line-height:24px;letter-spacing:1.15px;color:#000;font-weight:700;">Ventas</span>
<span class="t" style="left:1377.9px;top:383.9px;font-size:24px;line-height:24px;letter-spacing:1.38px;color:#111;">Material Eléctrico</span>
<span class="t" style="left:1857.3px;top:383.9px;font-size:24px;line-height:24px;letter-spacing:1.57px;color:#111;">Linterna</span>
<span class="t" style="left:2316.6px;top:383.9px;font-size:24px;line-height:24px;letter-spacing:0.35px;color:#111;">2.300 €</span>
<span class="t" style="left:1378.7px;top:427.9px;font-size:24px;line-height:24px;letter-spacing:1.34px;color:#111;">Calefacción y Ventilación</span>
<span class="t" style="left:1857.3px;top:427.9px;font-size:24px;line-height:24px;letter-spacing:0.96px;color:#111;">Estufas</span>
<span class="t" style="left:2316.8px;top:427.9px;font-size:24px;line-height:24px;letter-spacing:0.31px;color:#111;">5.500 €</span>
<span class="t" style="left:1377.9px;top:471.9px;font-size:24px;line-height:24px;letter-spacing:1.38px;color:#111;">Material Eléctrico</span>
<span class="t" style="left:1857.3px;top:471.9px;font-size:24px;line-height:24px;letter-spacing:0.78px;color:#111;">Baterías</span>
<span class="t" style="left:2316.8px;top:471.9px;font-size:24px;line-height:24px;letter-spacing:0.26px;color:#111;">800 €</span>
<span class="t" style="left:1377.9px;top:509.9px;font-size:24px;line-height:24px;letter-spacing:1.38px;color:#111;">Material Eléctrico</span>
<span class="t" style="left:1857.3px;top:509.9px;font-size:24px;line-height:24px;letter-spacing:0.61px;color:#111;">Luces</span>
<span class="t" style="left:2316.8px;top:509.9px;font-size:24px;line-height:24px;letter-spacing:0.26px;color:#111;">500 €</span>
<span class="t" style="left:1377.9px;top:548.4px;font-size:24px;line-height:24px;letter-spacing:0.88px;color:#111;">Baño y Fontanería</span>
<span class="t" style="left:1858.0px;top:548.4px;font-size:24px;line-height:24px;letter-spacing:0.80px;color:#111;">Grifería de Cocina</span>
<span class="t" style="left:2317.1px;top:548.4px;font-size:24px;line-height:24px;letter-spacing:0.27px;color:#111;">3.000 €</span>
<span class="t" style="left:1378.7px;top:592.4px;font-size:24px;line-height:24px;letter-spacing:1.34px;color:#111;">Calefacción y Ventilación</span>
<span class="t" style="left:1858.8px;top:592.4px;font-size:24px;line-height:24px;letter-spacing:1.60px;color:#111;">Termoconvectores</span>
<span class="t" style="left:2316.1px;top:592.4px;font-size:24px;line-height:24px;letter-spacing:0.70px;color:#111;">11.000 €</span>
<span class="t" style="left:1377.9px;top:638.9px;font-size:24px;line-height:24px;letter-spacing:1.21px;color:#111;">Ferretería Doméstica</span>
<span class="t" style="left:1857.3px;top:638.9px;font-size:24px;line-height:24px;letter-spacing:0.78px;color:#111;">Perchas</span>
<span class="t" style="left:2317.3px;top:638.9px;font-size:24px;line-height:24px;letter-spacing:0.22px;color:#111;">4.200 €</span>
<span class="t" style="left:1377.9px;top:680.4px;font-size:24px;line-height:24px;letter-spacing:0.88px;color:#111;">Baño y Fontanería</span>
<span class="t" style="left:1858.0px;top:680.4px;font-size:24px;line-height:24px;letter-spacing:0.90px;color:#111;">Grifería de Baño</span>
<span class="t" style="left:2316.1px;top:680.4px;font-size:24px;line-height:24px;letter-spacing:0.45px;color:#111;">12.000 €</span>
<span class="t" style="left:1377.9px;top:718.9px;font-size:24px;line-height:24px;letter-spacing:0.88px;color:#111;">Baño y Fontanería</span>
<span class="t" style="left:1858.8px;top:718.9px;font-size:24px;line-height:24px;letter-spacing:0.71px;color:#111;">Tapa WC y Accesorio</span>
<span class="t" style="left:2316.1px;top:718.9px;font-size:24px;line-height:24px;letter-spacing:0.43px;color:#111;">1.300 €</span>
<span class="t" style="left:1377.9px;top:756.9px;font-size:24px;line-height:24px;letter-spacing:1.72px;color:#111;">Electroportátiles</span>
<span class="t" style="left:1858.8px;top:756.9px;font-size:24px;line-height:24px;letter-spacing:1.58px;color:#111;">Taladro</span>
<span class="t" style="left:2316.1px;top:756.9px;font-size:24px;line-height:24px;letter-spacing:0.43px;color:#111;">1.200 €</span>
<span class="t" style="left:1858.0px;top:794.9px;font-size:24px;line-height:24px;letter-spacing:1.00px;color:#111;">Cinta</span>
<span class="t" style="left:2317.1px;top:794.9px;font-size:24px;line-height:24px;letter-spacing:0.17px;color:#111;">39 €</span>
<span class="t" style="left:1858.8px;top:832.9px;font-size:24px;line-height:24px;letter-spacing:1.94px;color:#111;">Tornillos</span>
<span class="t" style="left:2316.1px;top:832.9px;font-size:24px;line-height:24px;letter-spacing:0.45px;color:#111;">149 €</span>
<div class="r" style="left:1354px;top:898px;width:486px;height:42px;border:3px solid #217346;"></div>
<div class="r" style="left:1833px;top:934px;width:9px;height:9px;background:#217346;border:1.5px solid #fff;"></div>
<span class="t" style="left:1700.8px;top:908.7px;font-size:24px;line-height:24px;letter-spacing:0.22px;color:#111;">2.500,00 €</span>
<div class="r" style="left:1299px;top:162px;width:1260px;height:787px;border:7px solid #217346;border-left-width:8px;border-radius:4px;"></div>
</body></html>
